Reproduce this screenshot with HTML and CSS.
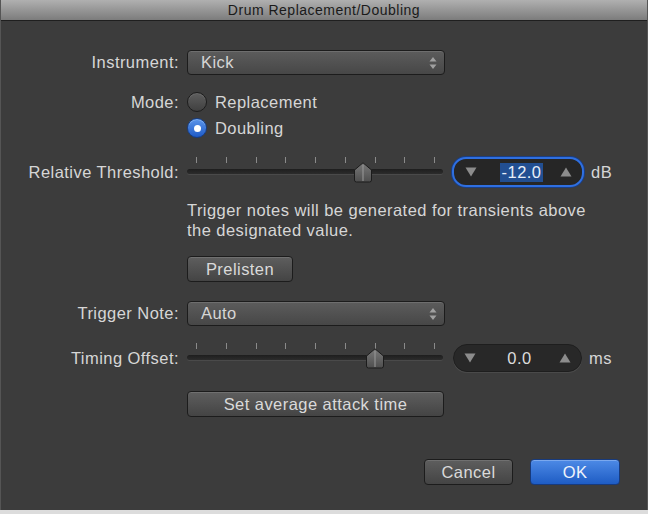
FILE: index.html
```html
<!DOCTYPE html>
<html lang="en">
<head>
    <meta charset="UTF-8">
    <title>Drum Replacement/Doubling</title>
    <link rel="stylesheet" href="styles.css">
</head>
<body>
    <div class="window">
        <div class="titlebar">Drum Replacement/Doubling</div>
        <div class="content">
            <div class="row row-instrument">
                <span class="label">Instrument:</span>
                <div class="popup">
                    <span>Kick</span>
                    <svg class="updown" width="8" height="14" viewBox="0 0 8 14"><path d="M4 1 L7.5 5.5 H0.5 Z M4 13 L7.5 8.5 H0.5 Z" fill="#a0a0a0"/></svg>
                </div>
            </div>
            <div class="row row-mode">
                <span class="label">Mode:</span>
                <span class="radio"></span>
                <span class="radio-text">Replacement</span>
            </div>
            <div class="row row-doubling">
                <span class="label"></span>
                <span class="radio checked"></span>
                <span class="radio-text">Doubling</span>
            </div>
            <div class="row row-threshold">
                <span class="label">Relative Threshold:</span>
                <div class="slider">
                    <div class="ticks">
                        <i></i><i></i><i></i><i></i><i></i><i></i><i></i><i></i><i></i>
                    </div>
                    <div class="track"></div>
                    <svg class="thumb" style="left: 166px" width="20" height="21" viewBox="0 0 20 21">
                        <defs><linearGradient id="tg1" x1="0" y1="0" x2="0" y2="1"><stop offset="0" stop-color="#7a7a7a"/><stop offset="1" stop-color="#4e4e4e"/></linearGradient></defs>
                        <path d="M10 0.8 L18.5 8 V18 Q18.5 20 16.5 20 H3.5 Q1.5 20 1.5 18 V8 Z" fill="url(#tg1)" stroke="#1c1c1c" stroke-width="1"/>
                        <line x1="10" y1="3" x2="10" y2="19" stroke="#9a9a9a" stroke-width="1"/>
                    </svg>
                </div>
                <div class="field focused">
                    <svg width="12" height="10" viewBox="0 0 12 10"><path d="M0.5 0.5 H11.5 L6 9.5 Z" fill="#8c8c8c"/></svg>
                    <span class="value selected">-12.0</span>
                    <svg width="12" height="10" viewBox="0 0 12 10"><path d="M0.5 9.5 H11.5 L6 0.5 Z" fill="#8c8c8c"/></svg>
                </div>
                <span class="unit">dB</span>
            </div>
            <div class="row row-note">
                <span class="label"></span>
                <p class="note">Trigger notes will be generated for transients above<br>the designated value.</p>
            </div>
            <div class="row row-prelisten">
                <span class="label"></span>
                <button class="btn prelisten">Prelisten</button>
            </div>
            <div class="row row-trigger">
                <span class="label">Trigger Note:</span>
                <div class="popup">
                    <span>Auto</span>
                    <svg class="updown" width="8" height="14" viewBox="0 0 8 14"><path d="M4 1 L7.5 5.5 H0.5 Z M4 13 L7.5 8.5 H0.5 Z" fill="#a0a0a0"/></svg>
                </div>
            </div>
            <div class="row row-timing">
                <span class="label">Timing Offset:</span>
                <div class="slider">
                    <div class="ticks">
                        <i></i><i></i><i></i><i></i><i></i><i></i><i></i><i></i><i></i>
                    </div>
                    <div class="track"></div>
                    <svg class="thumb" style="left: 178px" width="20" height="21" viewBox="0 0 20 21">
                        <defs><linearGradient id="tg2" x1="0" y1="0" x2="0" y2="1"><stop offset="0" stop-color="#7a7a7a"/><stop offset="1" stop-color="#4e4e4e"/></linearGradient></defs>
                        <path d="M10 0.8 L18.5 8 V18 Q18.5 20 16.5 20 H3.5 Q1.5 20 1.5 18 V8 Z" fill="url(#tg2)" stroke="#1c1c1c" stroke-width="1"/>
                        <line x1="10" y1="3" x2="10" y2="19" stroke="#9a9a9a" stroke-width="1"/>
                    </svg>
                </div>
                <div class="field">
                    <svg width="12" height="10" viewBox="0 0 12 10"><path d="M0.5 0.5 H11.5 L6 9.5 Z" fill="#8c8c8c"/></svg>
                    <span class="value">0.0</span>
                    <svg width="12" height="10" viewBox="0 0 12 10"><path d="M0.5 9.5 H11.5 L6 0.5 Z" fill="#8c8c8c"/></svg>
                </div>
                <span class="unit">ms</span>
            </div>
            <div class="row row-attack">
                <span class="label"></span>
                <button class="btn attack">Set average attack time</button>
            </div>
            <div class="footer">
                <button class="btn cancel">Cancel</button>
                <button class="btn ok">OK</button>
            </div>
        </div>
    </div>
</body>
</html>
```

FILE: styles.css
```css
html, body {
    margin: 0;
    padding: 0;
}
body {
    background: #dcdcdc;
    width: 648px;
    height: 514px;
    overflow: hidden;
    font-family: "Liberation Sans", Arial, sans-serif;
}
.window {
    width: 646px;
    height: 510px;
    margin-left: 1px;
    background: #3c3c3c;
    box-shadow: -1px 0 0 #555, 1px 0 0 #555;
}
.titlebar {
    height: 20px;
    line-height: 21px;
    text-align: center;
    font-size: 14px;
    letter-spacing: 0.5px;
    color: #1a1a1a;
    background: linear-gradient(#b0b0b0, #7c7c7c);
    border-bottom: 1px solid #1f1f1f;
}
.content {
    padding-top: 29px;
}
.row {
    display: flex;
    align-items: center;
    font-size: 16.5px;
    letter-spacing: 0.45px;
    color: #d6d6d6;
}
.label {
    width: 178px;
    flex: none;
    text-align: right;
    padding-right: 8px;
}
.popup {
    width: 236px;
    height: 23px;
    border: 1px solid #1c1c1c;
    border-radius: 4px;
    background: linear-gradient(#5c5c5c, #474747);
    box-shadow: inset 0 1px 0 #6e6e6e;
    display: flex;
    align-items: center;
    justify-content: space-between;
    padding: 0 7px 0 13px;
    box-sizing: content-box;
}
.row-instrument {
    height: 25px;
}
.row-mode {
    height: 20px;
    margin-top: 17px;
}
.row-doubling {
    height: 20px;
    margin-top: 6px;
}
.radio {
    width: 18px;
    height: 18px;
    border-radius: 50%;
    border: 1px solid #1c1c1c;
    background: linear-gradient(#5e5e5e, #404040);
    box-shadow: inset 0 1px 0 #6a6a6a;
    flex: none;
    position: relative;
}
.radio.checked {
    background: linear-gradient(#5b95ea, #1f5bc7);
    border-color: #163d84;
    box-shadow: inset 0 1px 0 #7eaef0;
}
.radio.checked::after {
    content: "";
    position: absolute;
    left: 5.5px;
    top: 5.5px;
    width: 7px;
    height: 7px;
    border-radius: 50%;
    background: #fff;
}
.radio-text {
    margin-left: 8px;
}
.row-threshold {
    height: 30px;
    margin-top: 19px;
}
.slider {
    width: 256px;
    height: 30px;
    position: relative;
    flex: none;
}
.ticks {
    display: flex;
    justify-content: space-between;
    padding: 0 8px 0 9px;
    height: 6px;
}
.ticks i {
    width: 1px;
    height: 6px;
    background: #8a8a8a;
}
.track {
    margin-top: 6px;
    height: 5px;
    border-radius: 3px;
    background: linear-gradient(#1e1e1e, #2c2c2c);
    box-shadow: 0 1px 0 #4a4a4a;
}
.thumb {
    position: absolute;
    top: 5px;
}
.field {
    margin-left: 9px;
    width: 128px;
    height: 26px;
    border-radius: 14px;
    background: #282828;
    border: 1px solid #1e1e1e;
    box-shadow: 0 1px 0 #4a4a4a;
    display: flex;
    align-items: center;
    justify-content: space-between;
    padding: 0 10px;
    box-sizing: border-box;
    flex: none;
}
.field.focused {
    width: 132px;
    height: 30px;
    margin-left: 9px;
    border: 2px solid #2f6fe0;
    box-shadow: 0 0 0 1px #1a3f86;
    background: #262626;
    padding: 0 10px 0 11px;
}
.value {
    color: #dcdcdc;
    padding: 0 2px;
    margin-left: 4px;
}
.value.selected {
    background: #224f92;
    color: #e8eef8;
    margin-left: 6px;
}
.unit {
    margin-left: 7px;
}
.row-timing .field {
    margin-left: 10px;
    width: 129px;
    height: 28px;
}
.row-note {
    margin-top: 13px;
}
.note {
    margin: 0;
    line-height: 20px;
}
.row-prelisten {
    margin-top: 16px;
}
.btn {
    font-family: "Liberation Sans", Arial, sans-serif;
    font-size: 16.5px;
    letter-spacing: 0.45px;
    color: #dadada;
    height: 26px;
    border: 1px solid #1c1c1c;
    border-radius: 4px;
    background: linear-gradient(#5e5e5e, #444444);
    box-shadow: inset 0 1px 0 #707070;
    padding: 0;
}
.prelisten {
    width: 106px;
}
.row-trigger {
    height: 25px;
    margin-top: 19px;
}
.row-timing {
    height: 30px;
    margin-top: 17px;
}
.row-attack {
    margin-top: 18px;
}
.attack {
    width: 257px;
}
.footer {
    display: flex;
    justify-content: flex-end;
    gap: 17px;
    padding-right: 27px;
    margin-top: 42px;
}
.cancel {
    width: 89px;
}
.ok {
    width: 90px;
    color: #f0f4fb;
    border-color: #173a7c;
    background: linear-gradient(#4d8ae6, #1e5cc4);
    box-shadow: inset 0 1px 0 #7aa8ee;
}
```
